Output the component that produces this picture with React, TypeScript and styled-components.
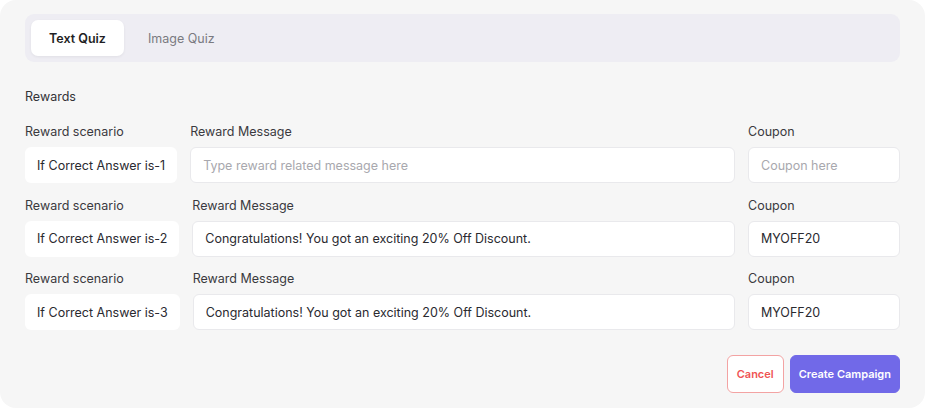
import React from "react";
import styled, { createGlobalStyle } from "styled-components";

const Global = createGlobalStyle`
  html, body { margin: 0; padding: 0; background: #ffffff; }
  body { font-family: Inter, "Noto Sans", sans-serif; -webkit-font-smoothing: antialiased; }
  * { box-sizing: border-box; }
`;

const Card = styled.div`
  width: 925px;
  height: 408px;
  background: #f6f6f6;
  border-radius: 16px;
  padding: 14px 25px 0 25px;
  display: flex;
  flex-direction: column;
`;

const Tabs = styled.div`
  height: 48px;
  background: #eeedf3;
  border-radius: 9px;
  padding: 6px;
  display: flex;
  align-items: stretch;
  gap: 6px;
`;

const Tab = styled.button<{ $active?: boolean }>`
  border: none;
  font-family: inherit;
  font-size: 12.5px;
  font-weight: ${(p) => (p.$active ? 600 : 400)};
  color: ${(p) => (p.$active ? "#1f1f24" : "#7a7a80")};
  background: ${(p) => (p.$active ? "#ffffff" : "transparent")};
  border-radius: 7px;
  padding: 0 18px;
  box-shadow: ${(p) => (p.$active ? "0 1px 3px rgba(0,0,0,0.06)" : "none")};
  cursor: pointer;
`;

const SectionTitle = styled.div`
  margin-top: 27px;
  font-size: 12.5px;
  line-height: 16px;
  color: #333338;
`;

const Rows = styled.div`
  margin-top: 19px;
  display: flex;
  flex-direction: column;
  gap: 14.5px;
`;

const Row = styled.div`
  display: flex;
  gap: 13px;
`;

const Field = styled.div<{ $grow?: boolean; $width?: number }>`
  display: flex;
  flex-direction: column;
  gap: 7px;
  flex: ${(p) => (p.$grow ? "1 1 0" : "0 0 auto")};
  width: ${(p) => (p.$width ? `${p.$width}px` : "auto")};
`;

const Label = styled.label`
  font-size: 12.5px;
  line-height: 16px;
  color: #3a3a40;
  white-space: nowrap;
`;

const Scenario = styled.div`
  height: 36px;
  background: #ffffff;
  border-radius: 6px;
  padding: 0 12px;
  display: flex;
  align-items: center;
  font-size: 12.5px;
  color: #2a2a30;
  white-space: nowrap;
`;

const Input = styled.input`
  height: 36px;
  width: 100%;
  background: #ffffff;
  border: 1px solid #e9e9ec;
  border-radius: 6px;
  padding: 0 12px;
  font-family: inherit;
  font-size: 12.5px;
  color: #2a2a30;
  outline: none;
  &::placeholder { color: #a8a8ae; }
`;

const Actions = styled.div`
  margin-top: 25px;
  display: flex;
  justify-content: flex-end;
  gap: 6px;
`;

const Button = styled.button<{ $primary?: boolean }>`
  height: 38px;
  border-radius: 6px;
  font-family: inherit;
  font-size: 11px;
  font-weight: 600;
  padding: 0 ${(p) => (p.$primary ? "8px" : "9px")};
  cursor: pointer;
  border: 1px solid ${(p) => (p.$primary ? "#7169e8" : "#f3a3a3")};
  background: ${(p) => (p.$primary ? "#7169e8" : "#ffffff")};
  color: ${(p) => (p.$primary ? "#ffffff" : "#ef5454")};
`;

const rows = [
  { scenario: "If Correct Answer is-1", message: "", coupon: "" },
  {
    scenario: "If Correct Answer is-2",
    message: "Congratulations! You got an exciting 20% Off Discount.",
    coupon: "MYOFF20",
  },
  {
    scenario: "If Correct Answer is-3",
    message: "Congratulations! You got an exciting 20% Off Discount.",
    coupon: "MYOFF20",
  },
];

export default function App() {
  return (
    <>
      <Global />
      <Card>
        <Tabs>
          <Tab $active>Text Quiz</Tab>
          <Tab>Image Quiz</Tab>
        </Tabs>
        <SectionTitle>Rewards</SectionTitle>
        <Rows>
          {rows.map((r, i) => (
            <Row key={i}>
              <Field>
                <Label>Reward scenario</Label>
                <Scenario>{r.scenario}</Scenario>
              </Field>
              <Field $grow>
                <Label>Reward Message</Label>
                <Input
                  defaultValue={r.message}
                  placeholder="Type reward related message here"
                />
              </Field>
              <Field $width={152}>
                <Label>Coupon</Label>
                <Input defaultValue={r.coupon} placeholder="Coupon here" />
              </Field>
            </Row>
          ))}
        </Rows>
        <Actions>
          <Button>Cancel</Button>
          <Button $primary>Create Campaign</Button>
        </Actions>
      </Card>
    </>
  );
}
